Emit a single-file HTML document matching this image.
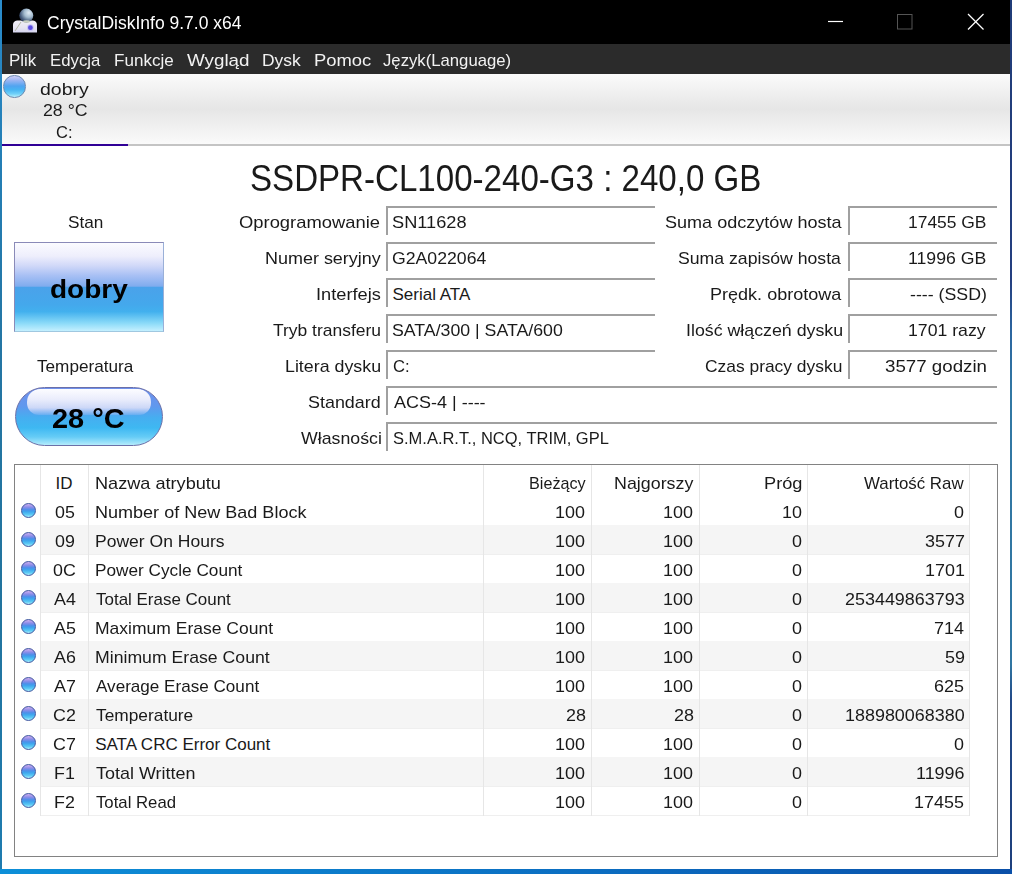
<!DOCTYPE html>
<html><head><meta charset="utf-8"><style>
html,body{margin:0;padding:0;width:1012px;height:874px;overflow:hidden;background:#fff;}
body{position:relative;font-family:"Liberation Sans",sans-serif;}
.t{position:absolute;white-space:nowrap;transform-origin:0 0;}
</style></head><body>
<div style="position:absolute;left:0px;top:0px;width:1012px;height:874px;background:#fff;"></div>
<div style="position:absolute;left:0px;top:0px;width:2px;height:874px;background:linear-gradient(180deg,#2a8ccc 0%,#2480b8 15%,#2476a4 40%,#22749e 70%,#1e7cb0 100%);"></div>
<div style="position:absolute;left:1010px;top:0px;width:2px;height:874px;background:linear-gradient(180deg,#203c78 0%,#243f80 32%,#2c66a0 38%,#3278a4 45%,#3076a2 76%,#224a88 80%,#1e3f7c 100%);"></div>
<div style="position:absolute;left:0px;top:869px;width:1012px;height:5px;background:linear-gradient(90deg,#0d8fd8,#0b6cc0 60%,#0a4fa8);"></div>
<div style="position:absolute;left:2px;top:0px;width:1008px;height:44px;background:#000;"></div>
<div class="t" style="left:47.30px;top:13.44px;font-size:17.5px;line-height:20px;font-weight:normal;color:#fff;transform:scaleX(0.9995)">CrystalDiskInfo 9.7.0 x64</div>
<svg style="position:absolute;left:820px;top:10px" width="180" height="25"><line x1="8" y1="11.5" x2="23" y2="11.5" stroke="#fff" stroke-width="1.2"/><rect x="77.5" y="4.5" width="14.5" height="14.5" fill="none" stroke="#555" stroke-width="1"/><line x1="148" y1="4" x2="163.5" y2="19.5" stroke="#fff" stroke-width="1.2"/><line x1="163.5" y1="4" x2="148" y2="19.5" stroke="#fff" stroke-width="1.2"/></svg>
<svg style="position:absolute;left:10px;top:6px" width="32" height="32"><defs><radialGradient id="gl" cx="0.68" cy="0.3" r="0.8"><stop offset="0" stop-color="#dfeaf4"/><stop offset="0.4" stop-color="#a4bccf"/><stop offset="0.75" stop-color="#4a6080"/><stop offset="1" stop-color="#243250"/></radialGradient><linearGradient id="bx" x1="0" y1="0" x2="0" y2="1"><stop offset="0" stop-color="#f0eef6"/><stop offset="0.6" stop-color="#e6e4f0"/><stop offset="1" stop-color="#d4d4ee"/></linearGradient></defs><path d="M3 19 Q3 15 7 14.5 L23 14.5 Q27 15 27 19 L27 26.5 L3 26.5 Z" fill="url(#bx)"/><line x1="5" y1="25" x2="11" y2="16" stroke="#b4b8a4" stroke-width="1"/><circle cx="16.3" cy="9.6" r="7" fill="url(#gl)"/><ellipse cx="16.5" cy="15.5" rx="3.5" ry="1.2" fill="#c8d0c0"/><circle cx="20.4" cy="21.7" r="3.4" fill="#c8c4f4"/><circle cx="20.4" cy="21.7" r="2.4" fill="#5a4ce0"/></svg>
<div style="position:absolute;left:2px;top:44px;width:1008px;height:30px;background:#2b2b2b;"></div>
<div class="t" style="left:9.10px;top:50.61px;font-size:17px;line-height:20px;font-weight:normal;color:#f2f2f2;transform:scaleX(0.9962)">Plik</div>
<div class="t" style="left:49.71px;top:50.61px;font-size:17px;line-height:20px;font-weight:normal;color:#f2f2f2;transform:scaleX(0.9860)">Edycja</div>
<div class="t" style="left:113.70px;top:50.61px;font-size:17px;line-height:20px;font-weight:normal;color:#f2f2f2;transform:scaleX(1.0034)">Funkcje</div>
<div class="t" style="left:186.80px;top:50.61px;font-size:17px;line-height:20px;font-weight:normal;color:#f2f2f2;transform:scaleX(1.1055)">Wygląd</div>
<div class="t" style="left:262.28px;top:50.61px;font-size:17px;line-height:20px;font-weight:normal;color:#f2f2f2;transform:scaleX(1.0243)">Dysk</div>
<div class="t" style="left:314.32px;top:50.61px;font-size:17px;line-height:20px;font-weight:normal;color:#f2f2f2;transform:scaleX(1.0824)">Pomoc</div>
<div class="t" style="left:383.40px;top:50.61px;font-size:17px;line-height:20px;font-weight:normal;color:#f2f2f2;transform:scaleX(0.9822)">Język(Language)</div>
<div style="position:absolute;left:2px;top:74px;width:1008px;height:70px;background:linear-gradient(180deg,#fbfbfb 0%,#ececec 35%,#e6e6e6 50%,#f0f0f0 75%,#fafafa 100%);"></div>
<div style="position:absolute;left:2px;top:144px;width:1008px;height:2px;background:#c4c4c4;"></div>
<div style="position:absolute;left:2px;top:144px;width:126px;height:2px;background:#300096;"></div>
<div style="position:absolute;left:3px;top:75px;width:22.5px;height:22.5px;border-radius:50%;box-sizing:border-box;border:1px solid #6a88b0;background:linear-gradient(180deg,#d0d0f8 0%,#98b4f2 22%,#50a4f0 48%,#48b4f2 65%,#70d0f8 85%,#b8f0fc 100%);"></div>
<div class="t" style="left:40.35px;top:80.11px;font-size:17px;line-height:20px;font-weight:normal;color:#1a1a1a;transform:scaleX(1.1463)">dobry</div>
<div class="t" style="left:42.56px;top:101.11px;font-size:17px;line-height:20px;font-weight:normal;color:#1a1a1a;transform:scaleX(1.0439)">28 °C</div>
<div class="t" style="left:56.43px;top:123.11px;font-size:17px;line-height:20px;font-weight:normal;color:#1a1a1a;transform:scaleX(0.9733)">C:</div>
<div class="t" style="left:250.21px;top:156.68px;font-size:37px;line-height:43px;font-weight:normal;color:#1a1a1a;transform:scaleX(0.8944)">SSDPR-CL100-240-G3 : 240,0 GB</div>
<div class="t" style="left:68.39px;top:212.61px;font-size:17px;line-height:20px;font-weight:normal;color:#1a1a1a;transform:scaleX(1.0121)">Stan</div>
<div style="position:absolute;left:14px;top:242px;width:150px;height:90px;box-sizing:border-box;border:1px solid #8a8ab8;border-bottom-color:#a0c8e0;border-right-color:#9ab0d8;background:linear-gradient(180deg,#fbfbff 0%,#eeeefc 15%,#d0d8f8 26%,#a8c0f4 37%,#80acee 49%,#4aa2ea 50.5%,#44a8ec 70%,#42b0ee 78%,#8adaf8 91%,#c4f0ff 100%);"></div>
<div class="t" style="left:49.62px;top:274.49px;font-size:26px;line-height:30px;font-weight:bold;color:#000;transform:scaleX(1.0775)">dobry</div>
<div class="t" style="left:37.40px;top:356.61px;font-size:17px;line-height:20px;font-weight:normal;color:#1a1a1a;transform:scaleX(1.0094)">Temperatura</div>
<div style="position:absolute;left:15px;top:386.5px;width:148px;height:59px;box-sizing:border-box;border-radius:29.5px;border:1px solid #6c70a8;background:linear-gradient(180deg,#7090ec 0%,#6098ee 32%,#46aef0 52%,#3eb8f2 70%,#66ccf6 86%,#b4ecfc 100%);overflow:hidden;"><div style="position:absolute;left:11px;top:1px;width:124px;height:26px;border-radius:13px 13px 12px 12px;filter:blur(0.7px);background:linear-gradient(180deg,#fcfcff 0%,#eaedfc 40%,#cdd8f7 72%,rgba(150,185,244,0.35) 100%);"></div></div>
<div class="t" style="left:52.37px;top:402.80px;font-size:28px;line-height:32px;font-weight:bold;color:#000;transform:scaleX(1.0324)">28 °C</div>
<div class="t" style="left:239.42px;top:212.61px;font-size:17px;line-height:20px;font-weight:normal;color:#1a1a1a;transform:scaleX(1.0814)">Oprogramowanie</div>
<div style="position:absolute;left:386px;top:206px;width:269px;height:29px;box-sizing:border-box;border-top:2px solid #a0a0a0;border-left:2px solid #a0a0a0;"></div>
<div class="t" style="left:392.43px;top:212.61px;font-size:17px;line-height:20px;font-weight:normal;color:#1a1a1a;transform:scaleX(1.0706)">SN11628</div>
<div class="t" style="left:264.84px;top:248.61px;font-size:17px;line-height:20px;font-weight:normal;color:#1a1a1a;transform:scaleX(1.0565)">Numer seryjny</div>
<div style="position:absolute;left:386px;top:242px;width:269px;height:29px;box-sizing:border-box;border-top:2px solid #a0a0a0;border-left:2px solid #a0a0a0;"></div>
<div class="t" style="left:392.46px;top:248.61px;font-size:17px;line-height:20px;font-weight:normal;color:#1a1a1a;transform:scaleX(1.0393)">G2A022064</div>
<div class="t" style="left:315.66px;top:284.61px;font-size:17px;line-height:20px;font-weight:normal;color:#1a1a1a;transform:scaleX(1.0724)">Interfejs</div>
<div style="position:absolute;left:386px;top:278px;width:269px;height:29px;box-sizing:border-box;border-top:2px solid #a0a0a0;border-left:2px solid #a0a0a0;"></div>
<div class="t" style="left:392.50px;top:284.61px;font-size:17px;line-height:20px;font-weight:normal;color:#1a1a1a;transform:scaleX(1.0000)">Serial ATA</div>
<div class="t" style="left:273.20px;top:320.61px;font-size:17px;line-height:20px;font-weight:normal;color:#1a1a1a;transform:scaleX(1.0269)">Tryb transferu</div>
<div style="position:absolute;left:386px;top:314px;width:269px;height:29px;box-sizing:border-box;border-top:2px solid #a0a0a0;border-left:2px solid #a0a0a0;"></div>
<div class="t" style="left:392.46px;top:320.61px;font-size:17px;line-height:20px;font-weight:normal;color:#1a1a1a;transform:scaleX(1.0426)">SATA/300 | SATA/600</div>
<div class="t" style="left:284.65px;top:356.61px;font-size:17px;line-height:20px;font-weight:normal;color:#1a1a1a;transform:scaleX(1.0478)">Litera dysku</div>
<div style="position:absolute;left:386px;top:350px;width:269px;height:29px;box-sizing:border-box;border-top:2px solid #a0a0a0;border-left:2px solid #a0a0a0;"></div>
<div class="t" style="left:392.52px;top:356.61px;font-size:17px;line-height:20px;font-weight:normal;color:#1a1a1a;transform:scaleX(0.9800)">C:</div>
<div class="t" style="left:308.35px;top:392.61px;font-size:17px;line-height:20px;font-weight:normal;color:#1a1a1a;transform:scaleX(1.0537)">Standard</div>
<div style="position:absolute;left:386px;top:386px;width:611px;height:29px;box-sizing:border-box;border-top:2px solid #a0a0a0;border-left:2px solid #a0a0a0;"></div>
<div class="t" style="left:393.50px;top:392.61px;font-size:17px;line-height:20px;font-weight:normal;color:#1a1a1a;transform:scaleX(1.0581)">ACS-4 | ----</div>
<div class="t" style="left:300.70px;top:428.61px;font-size:17px;line-height:20px;font-weight:normal;color:#1a1a1a;transform:scaleX(1.0434)">Własności</div>
<div style="position:absolute;left:386px;top:422px;width:611px;height:29px;box-sizing:border-box;border-top:2px solid #a0a0a0;border-left:2px solid #a0a0a0;"></div>
<div class="t" style="left:392.53px;top:428.61px;font-size:17px;line-height:20px;font-weight:normal;color:#1a1a1a;transform:scaleX(0.9697)">S.M.A.R.T., NCQ, TRIM, GPL</div>
<div class="t" style="left:665.04px;top:212.61px;font-size:17px;line-height:20px;font-weight:normal;color:#1a1a1a;transform:scaleX(1.0618)">Suma odczytów hosta</div>
<div style="position:absolute;left:848px;top:206px;width:149px;height:29px;box-sizing:border-box;border-top:2px solid #a0a0a0;border-left:2px solid #a0a0a0;"></div>
<div class="t" style="left:908.27px;top:212.61px;font-size:17px;line-height:20px;font-weight:normal;color:#1a1a1a;transform:scaleX(1.0253)">17455 GB</div>
<div class="t" style="left:678.26px;top:248.61px;font-size:17px;line-height:20px;font-weight:normal;color:#1a1a1a;transform:scaleX(1.0385)">Suma zapisów hosta</div>
<div style="position:absolute;left:848px;top:242px;width:149px;height:29px;box-sizing:border-box;border-top:2px solid #a0a0a0;border-left:2px solid #a0a0a0;"></div>
<div class="t" style="left:908.26px;top:248.61px;font-size:17px;line-height:20px;font-weight:normal;color:#1a1a1a;transform:scaleX(1.0392)">11996 GB</div>
<div class="t" style="left:709.74px;top:284.61px;font-size:17px;line-height:20px;font-weight:normal;color:#1a1a1a;transform:scaleX(1.0610)">Prędk. obrotowa</div>
<div style="position:absolute;left:848px;top:278px;width:149px;height:29px;box-sizing:border-box;border-top:2px solid #a0a0a0;border-left:2px solid #a0a0a0;"></div>
<div class="t" style="left:909.96px;top:284.61px;font-size:17px;line-height:20px;font-weight:normal;color:#1a1a1a;transform:scaleX(1.0444)">---- (SSD)</div>
<div class="t" style="left:685.51px;top:320.61px;font-size:17px;line-height:20px;font-weight:normal;color:#1a1a1a;transform:scaleX(1.0456)">Ilość włączeń dysku</div>
<div style="position:absolute;left:848px;top:314px;width:149px;height:29px;box-sizing:border-box;border-top:2px solid #a0a0a0;border-left:2px solid #a0a0a0;"></div>
<div class="t" style="left:908.26px;top:320.61px;font-size:17px;line-height:20px;font-weight:normal;color:#1a1a1a;transform:scaleX(1.0392)">1701 razy</div>
<div class="t" style="left:705.18px;top:356.61px;font-size:17px;line-height:20px;font-weight:normal;color:#1a1a1a;transform:scaleX(1.0235)">Czas pracy dysku</div>
<div style="position:absolute;left:848px;top:350px;width:149px;height:29px;box-sizing:border-box;border-top:2px solid #a0a0a0;border-left:2px solid #a0a0a0;"></div>
<div class="t" style="left:884.90px;top:356.61px;font-size:17px;line-height:20px;font-weight:normal;color:#1a1a1a;transform:scaleX(1.1011)">3577 godzin</div>
<div style="position:absolute;left:14px;top:464px;width:984px;height:393px;box-sizing:border-box;border:1px solid #828282;"></div>
<div style="position:absolute;left:41px;top:525px;width:928px;height:1px;background:#efefef;"></div>
<div style="position:absolute;left:41px;top:525px;width:928px;height:29px;background:#f5f5f5;"></div>
<div style="position:absolute;left:41px;top:554px;width:928px;height:1px;background:#efefef;"></div>
<div style="position:absolute;left:41px;top:583px;width:928px;height:1px;background:#efefef;"></div>
<div style="position:absolute;left:41px;top:583px;width:928px;height:29px;background:#f5f5f5;"></div>
<div style="position:absolute;left:41px;top:612px;width:928px;height:1px;background:#efefef;"></div>
<div style="position:absolute;left:41px;top:641px;width:928px;height:1px;background:#efefef;"></div>
<div style="position:absolute;left:41px;top:641px;width:928px;height:29px;background:#f5f5f5;"></div>
<div style="position:absolute;left:41px;top:670px;width:928px;height:1px;background:#efefef;"></div>
<div style="position:absolute;left:41px;top:699px;width:928px;height:1px;background:#efefef;"></div>
<div style="position:absolute;left:41px;top:699px;width:928px;height:29px;background:#f5f5f5;"></div>
<div style="position:absolute;left:41px;top:728px;width:928px;height:1px;background:#efefef;"></div>
<div style="position:absolute;left:41px;top:757px;width:928px;height:1px;background:#efefef;"></div>
<div style="position:absolute;left:41px;top:757px;width:928px;height:29px;background:#f5f5f5;"></div>
<div style="position:absolute;left:41px;top:786px;width:928px;height:1px;background:#efefef;"></div>
<div style="position:absolute;left:41px;top:815px;width:928px;height:1px;background:#efefef;"></div>
<div style="position:absolute;left:40px;top:465px;width:1px;height:351px;background:#e6e6e6;"></div>
<div style="position:absolute;left:88px;top:465px;width:1px;height:351px;background:#e6e6e6;"></div>
<div style="position:absolute;left:483px;top:465px;width:1px;height:351px;background:#e6e6e6;"></div>
<div style="position:absolute;left:591px;top:465px;width:1px;height:351px;background:#e6e6e6;"></div>
<div style="position:absolute;left:699px;top:465px;width:1px;height:351px;background:#e6e6e6;"></div>
<div style="position:absolute;left:807px;top:465px;width:1px;height:351px;background:#e6e6e6;"></div>
<div style="position:absolute;left:969px;top:465px;width:1px;height:351px;background:#e6e6e6;"></div>
<div class="t" style="left:55.50px;top:473.61px;font-size:17px;line-height:20px;font-weight:normal;color:#1a1a1a;transform:scaleX(1.0000)">ID</div>
<div class="t" style="left:95.13px;top:473.61px;font-size:17px;line-height:20px;font-weight:normal;color:#1a1a1a;transform:scaleX(1.0664)">Nazwa atrybutu</div>
<div class="t" style="left:529.05px;top:473.61px;font-size:17px;line-height:20px;font-weight:normal;color:#1a1a1a;transform:scaleX(0.9517)">Bieżący</div>
<div class="t" style="left:613.55px;top:473.61px;font-size:17px;line-height:20px;font-weight:normal;color:#1a1a1a;transform:scaleX(1.0500)">Najgorszy</div>
<div class="t" style="left:763.53px;top:473.61px;font-size:17px;line-height:20px;font-weight:normal;color:#1a1a1a;transform:scaleX(1.0706)">Próg</div>
<div class="t" style="left:863.70px;top:473.61px;font-size:17px;line-height:20px;font-weight:normal;color:#1a1a1a;transform:scaleX(0.9911)">Wartość Raw</div>
<div style="position:absolute;left:20.5px;top:503.0px;width:15px;height:15px;border-radius:50%;box-sizing:border-box;border:1px solid #3e56a0;background:linear-gradient(180deg,#d0b0f0 0%,#8a8ce8 25%,#4a90ea 45%,#3ea8ee 60%,#5ccaf4 82%,#a8ecfc 100%);"></div>
<div class="t" style="left:54.52px;top:503.11px;font-size:17px;line-height:20px;font-weight:normal;color:#1a1a1a;transform:scaleX(1.0500)">05</div>
<div class="t" style="left:95.14px;top:503.11px;font-size:17px;line-height:20px;font-weight:normal;color:#1a1a1a;transform:scaleX(1.0606)">Number of New Bad Block</div>
<div class="t" style="left:555.46px;top:503.11px;font-size:17px;line-height:20px;font-weight:normal;color:#1a1a1a;transform:scaleX(1.0550)">100</div>
<div class="t" style="left:662.96px;top:503.11px;font-size:17px;line-height:20px;font-weight:normal;color:#1a1a1a;transform:scaleX(1.0550)">100</div>
<div class="t" style="left:782.01px;top:503.11px;font-size:17px;line-height:20px;font-weight:normal;color:#1a1a1a;transform:scaleX(1.0550)">10</div>
<div class="t" style="left:954.30px;top:503.11px;font-size:17px;line-height:20px;font-weight:normal;color:#1a1a1a;transform:scaleX(1.0550)">0</div>
<div style="position:absolute;left:20.5px;top:532.0px;width:15px;height:15px;border-radius:50%;box-sizing:border-box;border:1px solid #3e56a0;background:linear-gradient(180deg,#d0b0f0 0%,#8a8ce8 25%,#4a90ea 45%,#3ea8ee 60%,#5ccaf4 82%,#a8ecfc 100%);"></div>
<div class="t" style="left:54.52px;top:532.11px;font-size:17px;line-height:20px;font-weight:normal;color:#1a1a1a;transform:scaleX(1.0500)">09</div>
<div class="t" style="left:95.17px;top:532.11px;font-size:17px;line-height:20px;font-weight:normal;color:#1a1a1a;transform:scaleX(1.0306)">Power On Hours</div>
<div class="t" style="left:555.46px;top:532.11px;font-size:17px;line-height:20px;font-weight:normal;color:#1a1a1a;transform:scaleX(1.0550)">100</div>
<div class="t" style="left:662.96px;top:532.11px;font-size:17px;line-height:20px;font-weight:normal;color:#1a1a1a;transform:scaleX(1.0550)">100</div>
<div class="t" style="left:791.50px;top:532.11px;font-size:17px;line-height:20px;font-weight:normal;color:#1a1a1a;transform:scaleX(1.0550)">0</div>
<div class="t" style="left:924.76px;top:532.11px;font-size:17px;line-height:20px;font-weight:normal;color:#1a1a1a;transform:scaleX(1.0550)">3577</div>
<div style="position:absolute;left:20.5px;top:561.0px;width:15px;height:15px;border-radius:50%;box-sizing:border-box;border:1px solid #3e56a0;background:linear-gradient(180deg,#d0b0f0 0%,#8a8ce8 25%,#4a90ea 45%,#3ea8ee 60%,#5ccaf4 82%,#a8ecfc 100%);"></div>
<div class="t" style="left:52.95px;top:561.11px;font-size:17px;line-height:20px;font-weight:normal;color:#1a1a1a;transform:scaleX(1.0500)">0C</div>
<div class="t" style="left:95.19px;top:561.11px;font-size:17px;line-height:20px;font-weight:normal;color:#1a1a1a;transform:scaleX(1.0125)">Power Cycle Count</div>
<div class="t" style="left:555.46px;top:561.11px;font-size:17px;line-height:20px;font-weight:normal;color:#1a1a1a;transform:scaleX(1.0550)">100</div>
<div class="t" style="left:662.96px;top:561.11px;font-size:17px;line-height:20px;font-weight:normal;color:#1a1a1a;transform:scaleX(1.0550)">100</div>
<div class="t" style="left:791.50px;top:561.11px;font-size:17px;line-height:20px;font-weight:normal;color:#1a1a1a;transform:scaleX(1.0550)">0</div>
<div class="t" style="left:924.76px;top:561.11px;font-size:17px;line-height:20px;font-weight:normal;color:#1a1a1a;transform:scaleX(1.0550)">1701</div>
<div style="position:absolute;left:20.5px;top:590.0px;width:15px;height:15px;border-radius:50%;box-sizing:border-box;border:1px solid #3e56a0;background:linear-gradient(180deg,#d0b0f0 0%,#8a8ce8 25%,#4a90ea 45%,#3ea8ee 60%,#5ccaf4 82%,#a8ecfc 100%);"></div>
<div class="t" style="left:54.00px;top:590.11px;font-size:17px;line-height:20px;font-weight:normal;color:#1a1a1a;transform:scaleX(1.0500)">A4</div>
<div class="t" style="left:96.20px;top:590.11px;font-size:17px;line-height:20px;font-weight:normal;color:#1a1a1a;transform:scaleX(0.9978)">Total Erase Count</div>
<div class="t" style="left:555.46px;top:590.11px;font-size:17px;line-height:20px;font-weight:normal;color:#1a1a1a;transform:scaleX(1.0550)">100</div>
<div class="t" style="left:662.96px;top:590.11px;font-size:17px;line-height:20px;font-weight:normal;color:#1a1a1a;transform:scaleX(1.0550)">100</div>
<div class="t" style="left:791.50px;top:590.11px;font-size:17px;line-height:20px;font-weight:normal;color:#1a1a1a;transform:scaleX(1.0550)">0</div>
<div class="t" style="left:844.58px;top:590.11px;font-size:17px;line-height:20px;font-weight:normal;color:#1a1a1a;transform:scaleX(1.0550)">253449863793</div>
<div style="position:absolute;left:20.5px;top:619.0px;width:15px;height:15px;border-radius:50%;box-sizing:border-box;border:1px solid #3e56a0;background:linear-gradient(180deg,#d0b0f0 0%,#8a8ce8 25%,#4a90ea 45%,#3ea8ee 60%,#5ccaf4 82%,#a8ecfc 100%);"></div>
<div class="t" style="left:54.00px;top:619.11px;font-size:17px;line-height:20px;font-weight:normal;color:#1a1a1a;transform:scaleX(1.0500)">A5</div>
<div class="t" style="left:95.17px;top:619.11px;font-size:17px;line-height:20px;font-weight:normal;color:#1a1a1a;transform:scaleX(1.0297)">Maximum Erase Count</div>
<div class="t" style="left:555.46px;top:619.11px;font-size:17px;line-height:20px;font-weight:normal;color:#1a1a1a;transform:scaleX(1.0550)">100</div>
<div class="t" style="left:662.96px;top:619.11px;font-size:17px;line-height:20px;font-weight:normal;color:#1a1a1a;transform:scaleX(1.0550)">100</div>
<div class="t" style="left:791.50px;top:619.11px;font-size:17px;line-height:20px;font-weight:normal;color:#1a1a1a;transform:scaleX(1.0550)">0</div>
<div class="t" style="left:934.26px;top:619.11px;font-size:17px;line-height:20px;font-weight:normal;color:#1a1a1a;transform:scaleX(1.0550)">714</div>
<div style="position:absolute;left:20.5px;top:648.0px;width:15px;height:15px;border-radius:50%;box-sizing:border-box;border:1px solid #3e56a0;background:linear-gradient(180deg,#d0b0f0 0%,#8a8ce8 25%,#4a90ea 45%,#3ea8ee 60%,#5ccaf4 82%,#a8ecfc 100%);"></div>
<div class="t" style="left:54.00px;top:648.11px;font-size:17px;line-height:20px;font-weight:normal;color:#1a1a1a;transform:scaleX(1.0500)">A6</div>
<div class="t" style="left:95.16px;top:648.11px;font-size:17px;line-height:20px;font-weight:normal;color:#1a1a1a;transform:scaleX(1.0389)">Minimum Erase Count</div>
<div class="t" style="left:555.46px;top:648.11px;font-size:17px;line-height:20px;font-weight:normal;color:#1a1a1a;transform:scaleX(1.0550)">100</div>
<div class="t" style="left:662.96px;top:648.11px;font-size:17px;line-height:20px;font-weight:normal;color:#1a1a1a;transform:scaleX(1.0550)">100</div>
<div class="t" style="left:791.50px;top:648.11px;font-size:17px;line-height:20px;font-weight:normal;color:#1a1a1a;transform:scaleX(1.0550)">0</div>
<div class="t" style="left:944.81px;top:648.11px;font-size:17px;line-height:20px;font-weight:normal;color:#1a1a1a;transform:scaleX(1.0550)">59</div>
<div style="position:absolute;left:20.5px;top:677.0px;width:15px;height:15px;border-radius:50%;box-sizing:border-box;border:1px solid #3e56a0;background:linear-gradient(180deg,#d0b0f0 0%,#8a8ce8 25%,#4a90ea 45%,#3ea8ee 60%,#5ccaf4 82%,#a8ecfc 100%);"></div>
<div class="t" style="left:54.00px;top:677.11px;font-size:17px;line-height:20px;font-weight:normal;color:#1a1a1a;transform:scaleX(1.0500)">A7</div>
<div class="t" style="left:96.20px;top:677.11px;font-size:17px;line-height:20px;font-weight:normal;color:#1a1a1a;transform:scaleX(1.0056)">Average Erase Count</div>
<div class="t" style="left:555.46px;top:677.11px;font-size:17px;line-height:20px;font-weight:normal;color:#1a1a1a;transform:scaleX(1.0550)">100</div>
<div class="t" style="left:662.96px;top:677.11px;font-size:17px;line-height:20px;font-weight:normal;color:#1a1a1a;transform:scaleX(1.0550)">100</div>
<div class="t" style="left:791.50px;top:677.11px;font-size:17px;line-height:20px;font-weight:normal;color:#1a1a1a;transform:scaleX(1.0550)">0</div>
<div class="t" style="left:934.26px;top:677.11px;font-size:17px;line-height:20px;font-weight:normal;color:#1a1a1a;transform:scaleX(1.0550)">625</div>
<div style="position:absolute;left:20.5px;top:706.0px;width:15px;height:15px;border-radius:50%;box-sizing:border-box;border:1px solid #3e56a0;background:linear-gradient(180deg,#d0b0f0 0%,#8a8ce8 25%,#4a90ea 45%,#3ea8ee 60%,#5ccaf4 82%,#a8ecfc 100%);"></div>
<div class="t" style="left:52.95px;top:706.11px;font-size:17px;line-height:20px;font-weight:normal;color:#1a1a1a;transform:scaleX(1.0500)">C2</div>
<div class="t" style="left:96.20px;top:706.11px;font-size:17px;line-height:20px;font-weight:normal;color:#1a1a1a;transform:scaleX(1.0189)">Temperature</div>
<div class="t" style="left:566.01px;top:706.11px;font-size:17px;line-height:20px;font-weight:normal;color:#1a1a1a;transform:scaleX(1.0550)">28</div>
<div class="t" style="left:673.51px;top:706.11px;font-size:17px;line-height:20px;font-weight:normal;color:#1a1a1a;transform:scaleX(1.0550)">28</div>
<div class="t" style="left:791.50px;top:706.11px;font-size:17px;line-height:20px;font-weight:normal;color:#1a1a1a;transform:scaleX(1.0550)">0</div>
<div class="t" style="left:844.58px;top:706.11px;font-size:17px;line-height:20px;font-weight:normal;color:#1a1a1a;transform:scaleX(1.0550)">188980068380</div>
<div style="position:absolute;left:20.5px;top:735.0px;width:15px;height:15px;border-radius:50%;box-sizing:border-box;border:1px solid #3e56a0;background:linear-gradient(180deg,#d0b0f0 0%,#8a8ce8 25%,#4a90ea 45%,#3ea8ee 60%,#5ccaf4 82%,#a8ecfc 100%);"></div>
<div class="t" style="left:52.95px;top:735.11px;font-size:17px;line-height:20px;font-weight:normal;color:#1a1a1a;transform:scaleX(1.0500)">C7</div>
<div class="t" style="left:95.20px;top:735.11px;font-size:17px;line-height:20px;font-weight:normal;color:#1a1a1a;transform:scaleX(1.0000)">SATA CRC Error Count</div>
<div class="t" style="left:555.46px;top:735.11px;font-size:17px;line-height:20px;font-weight:normal;color:#1a1a1a;transform:scaleX(1.0550)">100</div>
<div class="t" style="left:662.96px;top:735.11px;font-size:17px;line-height:20px;font-weight:normal;color:#1a1a1a;transform:scaleX(1.0550)">100</div>
<div class="t" style="left:791.50px;top:735.11px;font-size:17px;line-height:20px;font-weight:normal;color:#1a1a1a;transform:scaleX(1.0550)">0</div>
<div class="t" style="left:954.30px;top:735.11px;font-size:17px;line-height:20px;font-weight:normal;color:#1a1a1a;transform:scaleX(1.0550)">0</div>
<div style="position:absolute;left:20.5px;top:764.0px;width:15px;height:15px;border-radius:50%;box-sizing:border-box;border:1px solid #3e56a0;background:linear-gradient(180deg,#d0b0f0 0%,#8a8ce8 25%,#4a90ea 45%,#3ea8ee 60%,#5ccaf4 82%,#a8ecfc 100%);"></div>
<div class="t" style="left:54.00px;top:764.11px;font-size:17px;line-height:20px;font-weight:normal;color:#1a1a1a;transform:scaleX(1.0500)">F1</div>
<div class="t" style="left:96.20px;top:764.11px;font-size:17px;line-height:20px;font-weight:normal;color:#1a1a1a;transform:scaleX(1.0559)">Total Written</div>
<div class="t" style="left:555.46px;top:764.11px;font-size:17px;line-height:20px;font-weight:normal;color:#1a1a1a;transform:scaleX(1.0550)">100</div>
<div class="t" style="left:662.96px;top:764.11px;font-size:17px;line-height:20px;font-weight:normal;color:#1a1a1a;transform:scaleX(1.0550)">100</div>
<div class="t" style="left:791.50px;top:764.11px;font-size:17px;line-height:20px;font-weight:normal;color:#1a1a1a;transform:scaleX(1.0550)">0</div>
<div class="t" style="left:916.32px;top:764.11px;font-size:17px;line-height:20px;font-weight:normal;color:#1a1a1a;transform:scaleX(1.0550)">11996</div>
<div style="position:absolute;left:20.5px;top:793.0px;width:15px;height:15px;border-radius:50%;box-sizing:border-box;border:1px solid #3e56a0;background:linear-gradient(180deg,#d0b0f0 0%,#8a8ce8 25%,#4a90ea 45%,#3ea8ee 60%,#5ccaf4 82%,#a8ecfc 100%);"></div>
<div class="t" style="left:54.00px;top:793.11px;font-size:17px;line-height:20px;font-weight:normal;color:#1a1a1a;transform:scaleX(1.0500)">F2</div>
<div class="t" style="left:96.20px;top:793.11px;font-size:17px;line-height:20px;font-weight:normal;color:#1a1a1a;transform:scaleX(0.9850)">Total Read</div>
<div class="t" style="left:555.46px;top:793.11px;font-size:17px;line-height:20px;font-weight:normal;color:#1a1a1a;transform:scaleX(1.0550)">100</div>
<div class="t" style="left:662.96px;top:793.11px;font-size:17px;line-height:20px;font-weight:normal;color:#1a1a1a;transform:scaleX(1.0550)">100</div>
<div class="t" style="left:791.50px;top:793.11px;font-size:17px;line-height:20px;font-weight:normal;color:#1a1a1a;transform:scaleX(1.0550)">0</div>
<div class="t" style="left:914.21px;top:793.11px;font-size:17px;line-height:20px;font-weight:normal;color:#1a1a1a;transform:scaleX(1.0550)">17455</div>
</body></html>
